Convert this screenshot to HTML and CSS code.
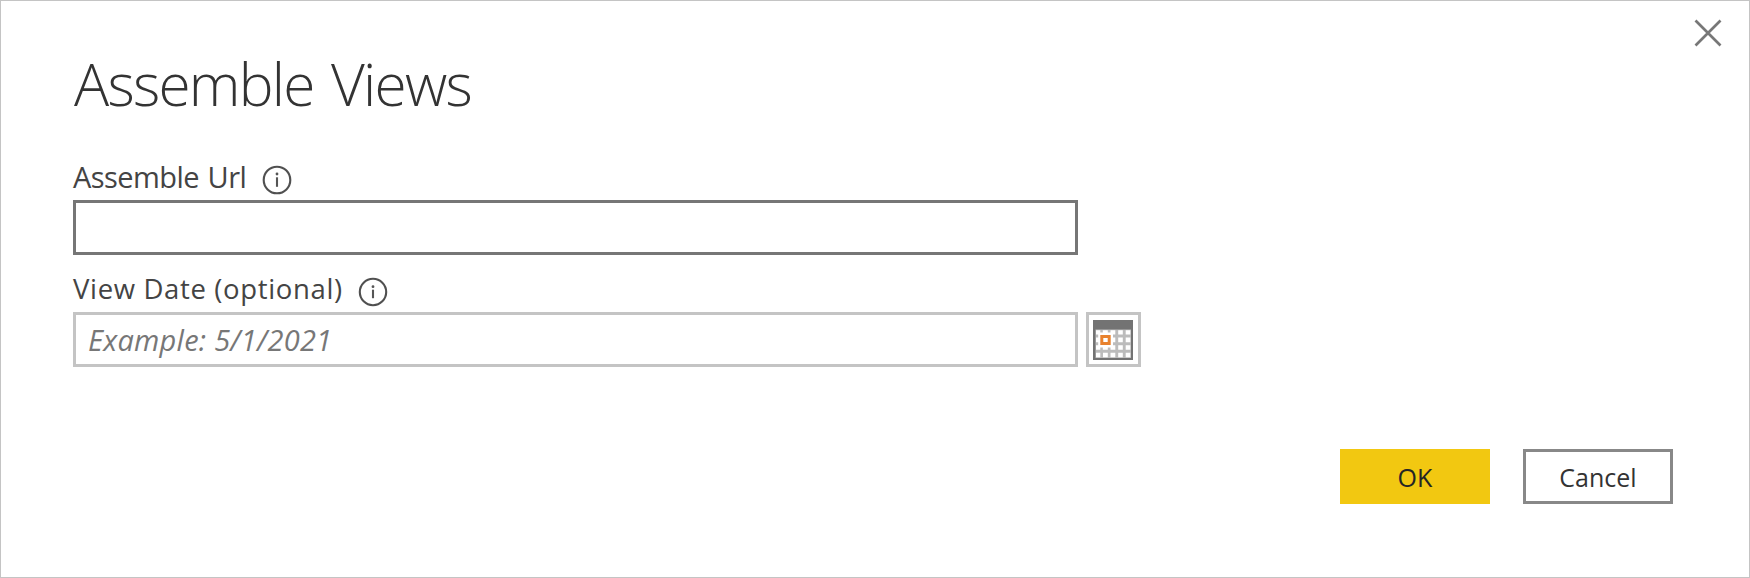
FILE: index.html
```html
<!DOCTYPE html>
<html lang="en">
<head>
<meta charset="utf-8">
<title>Assemble Views</title>
<link rel="stylesheet" href="styles.css">
</head>
<body>
<main class="dialog">
  <header class="header">
    <h1 class="title">Assemble Views</h1>
    <button class="close" aria-label="Close">
      <svg width="28" height="28" viewBox="0 0 28 28"><path d="M1.5 1.5L26.5 26.5M26.5 1.5L1.5 26.5" fill="none" stroke="#777" stroke-width="2.7"/></svg>
    </button>
  </header>
  <section class="field">
    <div class="label-row">
      <label class="label url-label" for="url">Assemble Url</label>
      <svg class="info" width="30" height="30" viewBox="0 0 30 30"><circle cx="15" cy="15" r="13.3" fill="none" stroke="#505050" stroke-width="2.1"/><path d="M15 12.3V21.8" stroke="#555" stroke-width="2.1"/><circle cx="15" cy="9" r="1.4" fill="#555"/></svg>
    </div>
    <input id="url" class="input active" type="text">
  </section>
  <section class="field">
    <div class="label-row date-row">
      <label class="label date-label" for="date">View Date (optional)</label>
      <svg class="info" width="30" height="30" viewBox="0 0 30 30"><circle cx="15" cy="15" r="13.2" fill="none" stroke="#505050" stroke-width="2.1"/><path d="M15 12.7V21.2" stroke="#555" stroke-width="2.1"/><circle cx="15" cy="9.7" r="1.4" fill="#555"/></svg>
    </div>
    <div class="input-row">
      <input id="date" class="input" type="text" placeholder="Example: 5/1/2021">
      <button class="calendar" aria-label="Pick a date">
        <svg width="40" height="40" viewBox="0 0 40 40">
          <path fill="#737373" d="M0 0H40V40H0z"/>
          <path fill="#bcbcbc" d="M2.5 9.5H38V38H2.5z"/>
          <g fill="#fff">
            <path d="M3 10.3H7.3V14.5H3zM9.8 10.3H14.8V14.5H9.8zM17.5 10.3H22.3V14.5H17.5zM25.2 10.3H29.8V14.5H25.2zM32.7 10.3H37.3V14.5H32.7z"/>
            <path d="M3 17.5H7.3V22.3H3zM25.2 17.5H29.8V22.3H25.2zM32.7 17.5H37.3V22.3H32.7z"/>
            <path d="M3 25.2H7.3V29.8H3zM9.8 25.2H14.8V29.8H9.8zM17.5 25.2H22.3V29.8H17.5zM25.2 25.2H29.8V29.8H25.2zM32.7 25.2H37.3V29.8H32.7z"/>
            <path d="M3 32.8H7.3V37.3H3zM10 32.8H14.8V37.3H10zM17.5 32.8H22.3V37.3H17.5zM25.2 32.8H29.8V37.3H25.2zM32.7 32.8H37.3V37.3H32.7z"/>
            <path d="M5.2 12.5H20V27.5H5.2zM19 17.5H22.3V22.3H19z"/>
          </g>
          <path d="M8.8 16.4H16.2V23.6H8.8z" fill="#fff" stroke="#e8822e" stroke-width="3"/>
        </svg>
      </button>
    </div>
  </section>
  <footer class="actions">
    <button class="button primary">OK</button>
    <button class="button">Cancel</button>
  </footer>
</main>
</body>
</html>
```
FILE: styles.css
```css
* { box-sizing: border-box; }
body { margin: 0; background: #fff; font-family: "Segoe UI", "Open Sans", "Noto Sans", sans-serif; font-weight: 370; }
button { padding: 0; background: #fff; font-family: inherit; font-weight: inherit; }
.dialog { width: 1750px; height: 578px; border: 1px solid #c4c4c4; padding: 0 76px 0 72px; overflow: hidden; }
.header { display: flex; justify-content: space-between; height: 158px; }
.title { margin: 42px 0 0 1px; font: 300 58.5px/80px "Segoe UI", "Open Sans", sans-serif; letter-spacing: -1.75px; word-spacing: 4px; color: #333; white-space: nowrap; }
.close { width: 28px; height: 28px; margin: 18px -49px 0 0; border: 0; }
.close svg, .info, .calendar svg { display: block; }
.label-row { display: flex; height: 41px; }
.date-row { height: 57px; padding-top: 16px; }
.label { font-size: 29px; line-height: 35px; color: #444; white-space: nowrap; }
.url-label { width: 189px; letter-spacing: -0.55px; word-spacing: 1.5px; }
.date-label { width: 285px; font-size: 27.5px; line-height: 35px; letter-spacing: 0.65px; }
.info { margin-top: 6px; }
.date-row .info { margin-top: 5.5px; }
.input { display: block; width: 1005px; height: 55px; margin: 0; padding: 0 12px; border: 3px solid #c4c4c4; border-radius: 0; outline: none; font: 370 29px "Segoe UI", "Open Sans", "Noto Sans", sans-serif; color: #444; }
.active { border-color: #767676; }
.input::placeholder { color: #777; opacity: 1; font-style: italic; letter-spacing: 0.25px; }
.input-row { display: flex; gap: 8px; }
.calendar { width: 55px; height: 55px; padding: 4px; border: 3px solid #c4c4c4; }
.actions { display: flex; justify-content: flex-end; gap: 33px; margin-top: 82px; }
.button { width: 150px; height: 55px; border: 3px solid #888; font-size: 25px; color: #333; }
.primary { border-color: #f2c811; background: #f2c811; color: #252525; }
```
